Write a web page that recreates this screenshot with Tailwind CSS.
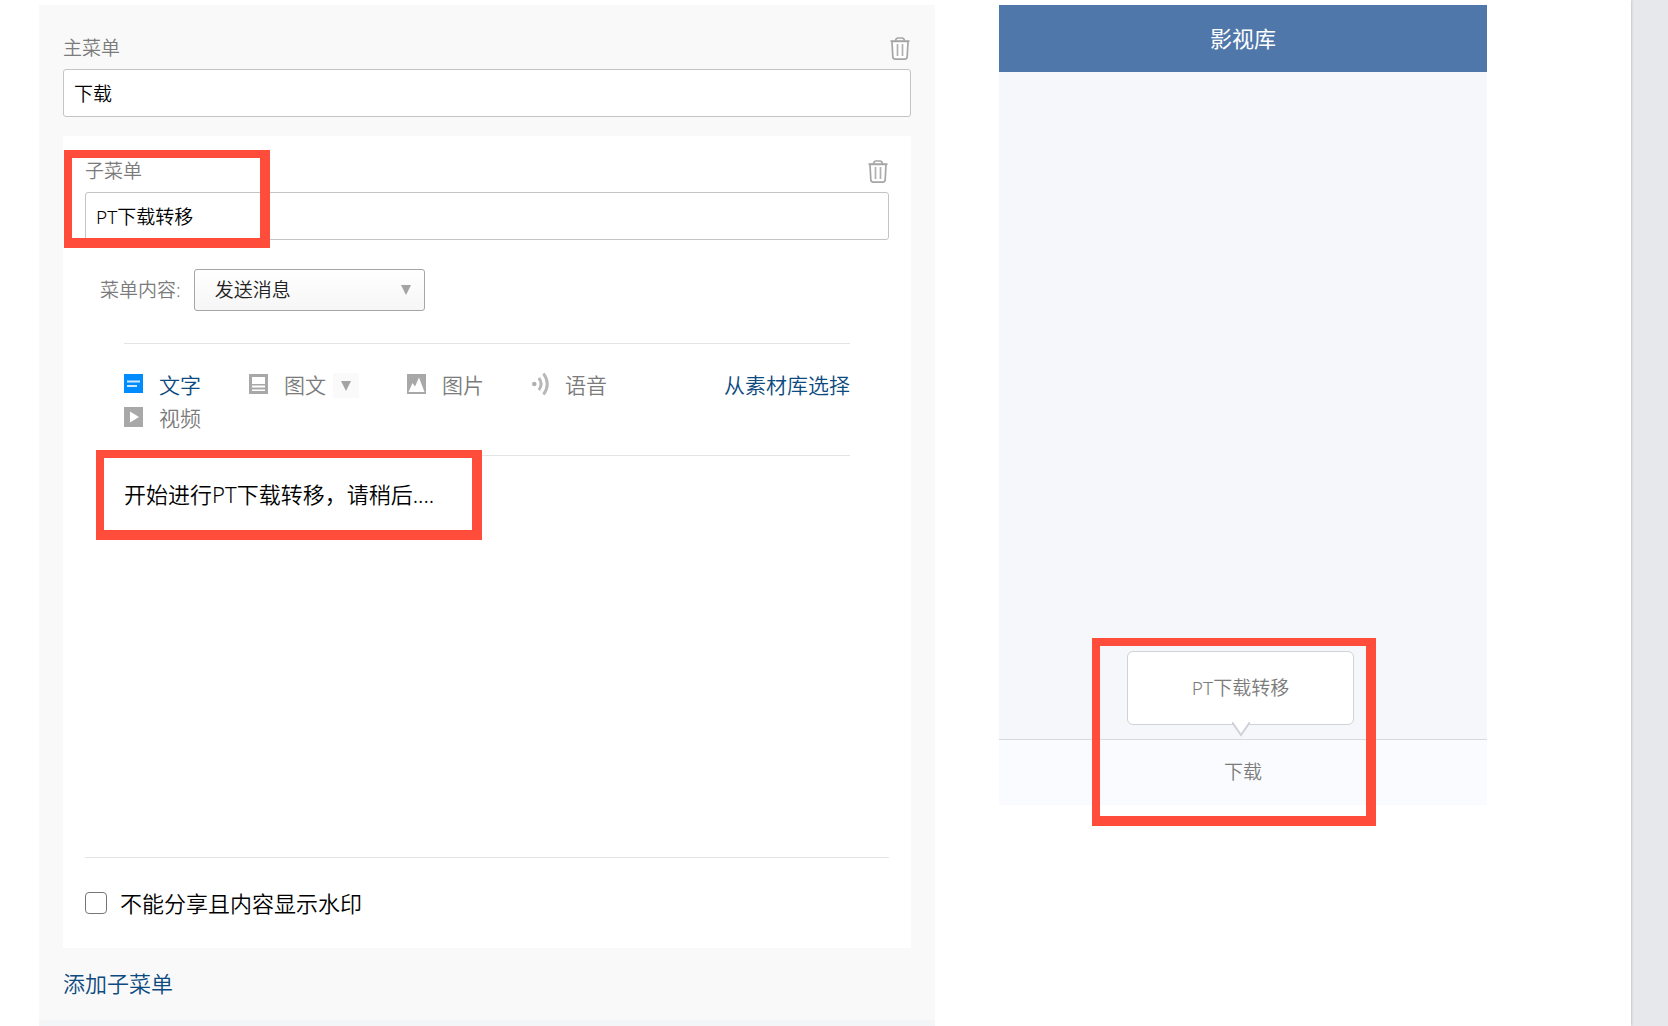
<!DOCTYPE html>
<html lang="zh-CN">
<head>
    <meta charset="UTF-8">
    <meta name="viewport" content="width=device-width, initial-scale=1.0">
    <title>自定义菜单</title>
    <script src="https://cdn.jsdelivr.net/npm/@tailwindcss/browser@4"></script>
</head>
<body class="bg-[#e7e8eb] min-h-screen font-['Noto_Sans','Noto_Sans_CJK_SC',sans-serif] font-[350] text-black">
    <svg class="hidden">
        <symbol id="trash" viewBox="0 0 20 23">
            <path d="M2 4.5h16l-.8 15q-.1 2.7-2.6 2.7H5.4q-2.5 0-2.6-2.7z" fill="#fff" stroke="#a6a6a6" stroke-width="1.7"/>
            <path d="M.5 4.2h19M5.5 4q.3-3 2.5-3h4q2.2 0 2.5 3" fill="none" stroke="#a6a6a6" stroke-width="1.7"/>
            <path d="M7.5 7v12M12.5 7v12" stroke="#b0b0b0" stroke-width="1.7"/>
        </symbol>
    </svg>

    <main class="flex items-start gap-16 mr-[37px] pt-[5px] pl-[39px] pr-36 min-h-screen bg-white shadow-[0_0_3px_rgba(0,0,0,0.25)]">
        <!-- Menu editor -->
        <section class="flex-1 min-w-0 bg-[#f9f9f9]">
            <div class="px-6 pt-[29px]">
                <div class="flex items-center justify-between h-7 mb-[7px] pr-px">
                    <label for="mainMenu" class="text-[19px] leading-7 text-[#7b7b7b]">主菜单</label>
                    <button type="button" aria-label="删除主菜单"><svg class="block w-5 h-[23px]"><use href="#trash"/></svg></button>
                </div>
                <input id="mainMenu" type="text" value="下载" class="block w-full h-12 px-2.5 text-[19px] bg-white border border-[#c4c4c4] rounded-[3px]">

                <div class="relative mt-[19px] px-[22px] pt-[21px] bg-white">
                    <div class="flex items-center justify-between h-7 mb-[7px] pr-px">
                        <label for="subMenu" class="text-[19px] leading-7 text-[#7b7b7b]">子菜单</label>
                        <button type="button" aria-label="删除子菜单"><svg class="block w-5 h-[23px]"><use href="#trash"/></svg></button>
                    </div>
                    <input id="subMenu" type="text" value="PT下载转移" class="block w-full h-12 px-2.5 text-[19px] bg-white border border-[#c4c4c4] rounded-[3px]">

                    <div class="flex items-center gap-[13px] mt-[29px] ml-[15px]">
                        <label for="menuType" class="text-[19px] leading-7 text-[#7b7b7b]">菜单内容:</label>
                        <div class="relative">
                            <select id="menuType" class="block appearance-none w-[231px] h-[42px] pl-5 text-[19px] text-[#222] bg-linear-to-b from-white to-[#f6f6f6] border border-[#a6a6a6] rounded-[3px]">
                                <option>发送消息</option>
                            </select>
                            <svg class="absolute right-[14px] top-4 w-[10px] h-[10px] pointer-events-none" viewBox="0 0 10 10"><path d="M0 0h10L5 10z" fill="#a3a3a3"/></svg>
                        </div>
                    </div>

                    <!-- Message type tabs -->
                    <div class="flex items-start mt-8 mx-[39px] pt-[25px] pb-5 border-y border-[#e4e4e4] text-[21px] leading-[33px] text-[#7b7b7b]">
                        <div class="flex flex-1 flex-wrap gap-x-12">
                            <button type="button" class="flex items-center gap-4 text-[#0c4a80]">
                                <svg class="w-[19px] h-[19px] mb-1" viewBox="0 0 19 19"><path d="M0 0h19v19H0z" fill="#008cff"/><path d="M3 7.5h13M3 12h10" stroke="#cfe8ff" stroke-width="2"/></svg>
                                文字
                            </button>
                            <div class="flex items-center gap-[7px]">
                                <button type="button" class="flex items-center gap-4">
                                    <svg class="w-[19px] h-5 mb-1" viewBox="0 0 19 20"><path d="M0 0h19v20H0z" fill="#a8a8a8"/><path d="M3 3h13v7H3zM3 11.5h13v2H3zM3 15.5h13V17H3z" fill="#fff"/></svg>
                                    图文
                                </button>
                                <button type="button" aria-label="更多图文" class="grid place-items-center w-[26px] h-[25px] bg-[#fafafa]">
                                    <svg class="w-[10px] h-[10px]" viewBox="0 0 10 10"><path d="M0 0h10L5 10z" fill="#a3a3a3"/></svg>
                                </button>
                            </div>
                            <button type="button" class="flex items-center gap-4">
                                <svg class="w-[19px] h-5 mb-1" viewBox="0 0 19 20"><path d="M0 0h19v20H0z" fill="#a8a8a8"/><path d="M1.5 18l4-9L8 12.5l4-9L17.5 18z" fill="#fff"/></svg>
                                图片
                            </button>
                            <button type="button" class="flex items-center gap-4">
                                <svg class="w-[17px] h-6 mb-1" viewBox="0 0 17 24"><circle cx="2.3" cy="12" r="2.3" fill="#b0b0b0"/><path d="M6.8 6q4.6 6 0 12M11.5 1.5q7.5 10.5 0 21" fill="none" stroke="#b8b8b8" stroke-width="3"/></svg>
                                语音
                            </button>
                            <button type="button" class="flex items-center gap-4">
                                <svg class="w-[19px] h-5 mb-1" viewBox="0 0 19 20"><path d="M0 0h19v20H0z" fill="#a8a8a8"/><path d="M6 4.5v11l9-5.5z" fill="#fff"/></svg>
                                视频
                            </button>
                        </div>
                        <a href="#" class="text-[#0c4a80]">从素材库选择</a>
                    </div>

                    <textarea aria-label="消息内容" class="block w-full h-[401px] px-[39px] pt-[22px] resize-none text-[22px] leading-[33px]">开始进行PT下载转移，请稍后....</textarea>

                    <div class="flex items-center gap-[13px] py-[29px] border-t border-[#e4e4e4]">
                        <input id="noShare" type="checkbox" class="appearance-none w-[22px] h-[22px] bg-white border border-[#767676] rounded-[4px] checked:bg-[#008cff]">
                        <label for="noShare" class="text-[22px] leading-8">不能分享且内容显示水印</label>
                    </div>

                    <!-- Callout frames -->
                    <div class="absolute left-px top-[14px] w-[206px] h-[98px] border-8 border-r-10 border-b-10 border-[#ff4c3b] pointer-events-none"></div>
                    <div class="absolute left-[33px] top-[314px] w-[386px] h-[90px] border-8 border-r-10 border-b-10 border-[#ff4c3b] pointer-events-none"></div>
                </div>

                <a href="#" class="block pt-[19px] pb-[21px] text-[22px] leading-8 text-[#0c4a80]">添加子菜单</a>
            </div>
            <div class="h-1.5 bg-[#f4f5f7]"></div>
        </section>

        <!-- Phone preview -->
        <aside class="relative w-[488px] shrink-0 text-[19px] text-[#7b7b7b] text-center">
            <h2 class="h-[67px] text-[22px] leading-[67px] font-normal text-white bg-[#4f77aa]">影视库</h2>
            <div class="h-[667px] bg-[#f5f7fb]"></div>
            <button type="button" class="block w-full h-[66px] bg-[#fafbfe] border-t border-[#d9dade]">下载</button>

            <button type="button" class="absolute left-32 bottom-20 w-[227px] h-[74px] bg-white border border-[#d0d2d8] rounded-md">
                PT下载转移
                <svg class="absolute left-1/2 -bottom-[13px] -translate-x-1/2 w-[18px] h-[15px]" viewBox="0 0 18 15"><path d="M0 0h18l-9 14z" fill="#fff"/><path d="M0 0l9 13 9-13" fill="none" stroke="#d0d2d8" stroke-width="2"/></svg>
            </button>
            <div class="absolute left-[93px] top-[633px] w-[284px] h-[188px] border-8 border-r-10 border-b-10 border-[#ff4c3b] pointer-events-none"></div>
        </aside>
    </main>
</body>
</html>
